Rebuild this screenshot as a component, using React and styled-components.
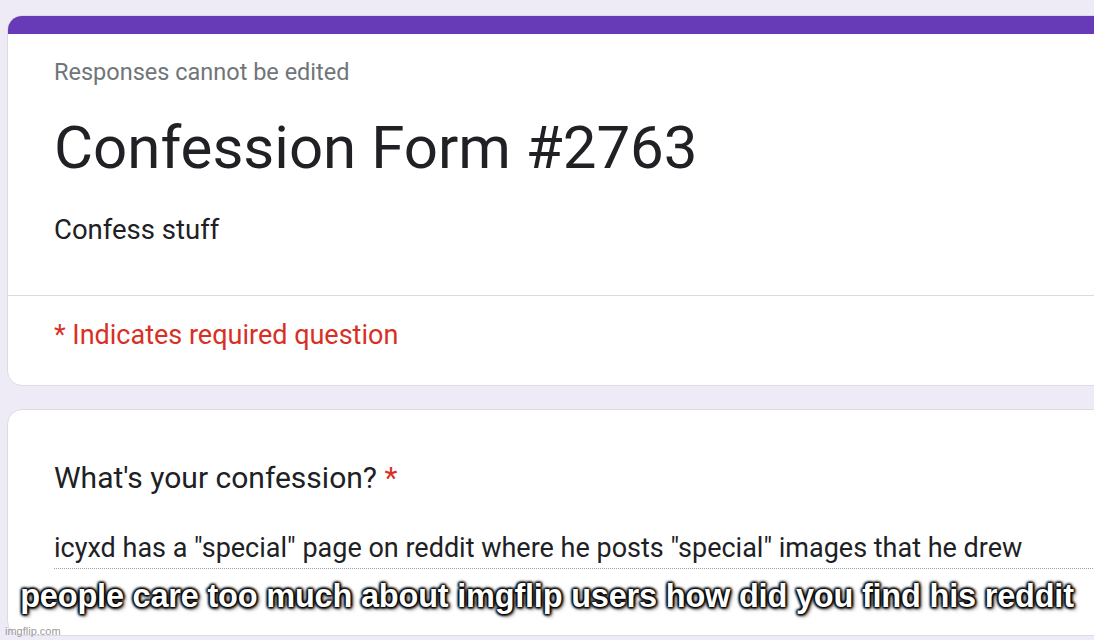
import React from 'react';
import styled, { createGlobalStyle } from 'styled-components';

const GlobalStyle = createGlobalStyle`
   html, body {
      margin: 0;
      padding: 0;
      background: #eeebf7;
      overflow: hidden;
   }
   body {
      font-family: Roboto, "Noto Sans", Arial, sans-serif;
   }
`;

const Page = styled.div`
   position: relative;
   width: 1094px;
   height: 640px;
   overflow: hidden;
   padding: 15px 0 0 7px;
   box-sizing: border-box;
   display: flex;
   flex-direction: column;
   gap: 23px;
`;

const Card = styled.div`
   flex-shrink: 0;
   width: 1200px;
   background: #fff;
   border: 1px solid #dadce0;
   border-radius: 15px;
   overflow: hidden;
   box-sizing: border-box;
`;

const TopBar = styled.div`
   height: 19px;
   background: #673ab7;
   margin: -1px -1px 0;
`;

const Section = styled.div`
   padding: ${(p) => p.$pad};
   border-bottom: ${(p) => (p.$divider ? '1px solid #dadce0' : 'none')};
`;

const Text = styled.div`
   font-size: ${(p) => p.$size}px;
   line-height: ${(p) => p.$lh}px;
   color: ${(p) => p.$color || '#202124'};
   margin-top: ${(p) => p.$mt || 0}px;
   white-space: nowrap;
`;

const Star = styled.span`
   color: #d93025;
`;

const Answer = styled.div`
   margin: 37px 0 0 0;
   width: 1039px;
   padding-bottom: 5px;
   border-bottom: 1px dotted #9aa0a6;
   font-size: 27px;
   line-height: 30px;
   color: #202124;
   white-space: nowrap;
`;

const Caption = styled.div`
   position: absolute;
   left: 0;
   right: 0;
   top: 577px;
   text-align: center;
   font-family: "Liberation Sans", Arial, sans-serif;
   font-weight: bold;
   font-size: 32.5px;
   line-height: 38px;
   color: #fff;
   letter-spacing: -0.2px;
   text-shadow: 0 0 2px #000, 0 0 3px #000, 1px 1px 3px #000, -1px -1px 3px #000,
      1px -1px 3px #000, -1px 1px 3px #000, 2px 2px 4px rgba(0, 0, 0, 0.6);
`;

const Watermark = styled.div`
   position: absolute;
   left: 5px;
   bottom: 3px;
   font-family: "Liberation Sans", Arial, sans-serif;
   font-size: 11px;
   color: #9a9a9a;
`;

export default function App() {
   return (
      <>
         <GlobalStyle />
         <Page>
            <Card>
               <TopBar />
               <Section $pad="24px 46px 49px" $divider>
                  <Text $size={23.5} $lh={28} $color="#70757a">Responses cannot be edited</Text>
                  <Text $size={60} $lh={72} $mt={26}>Confession Form #2763</Text>
                  <Text $size={27.5} $lh={32} $mt={30}>Confess stuff</Text>
               </Section>
               <Section $pad="23px 46px 34px">
                  <Text $size={27} $lh={32} $color="#d93025">* Indicates required question</Text>
               </Section>
            </Card>
            <Card>
               <Section $pad="50px 46px 66px">
                  <Text $size={30} $lh={36}>What's your confession? <Star>*</Star></Text>
                  <Answer>icyxd has a "special" page on reddit where he posts "special" images that he drew</Answer>
               </Section>
            </Card>
            <Caption>people care too much about imgflip users how did you find his reddit</Caption>
            <Watermark>imgflip.com</Watermark>
         </Page>
      </>
   );
}
